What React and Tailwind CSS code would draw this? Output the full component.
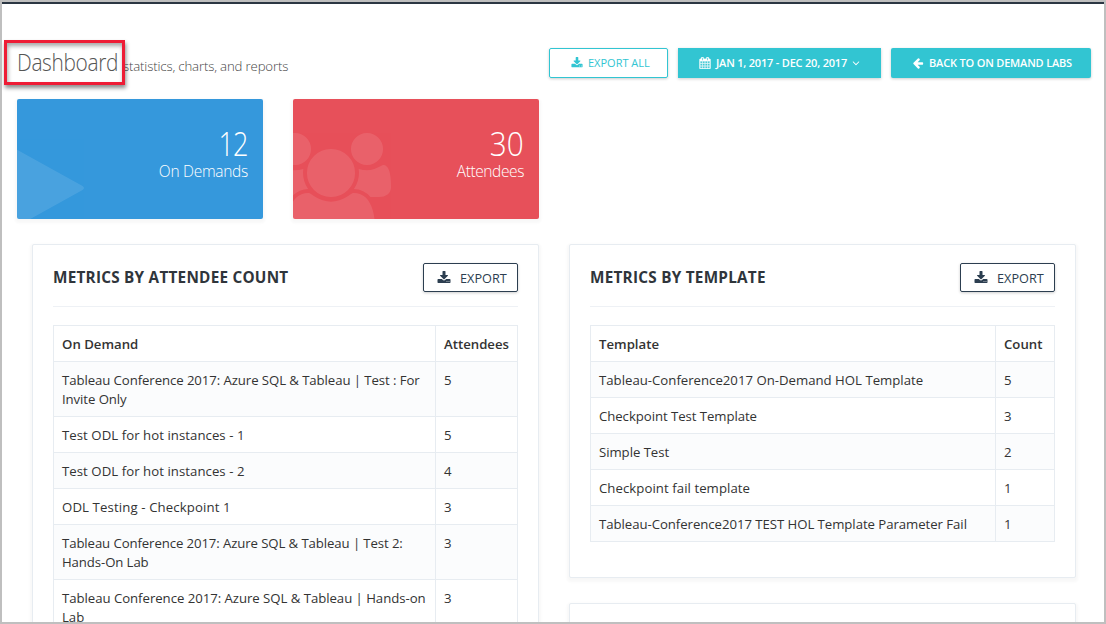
import React from "react";

const PATHS = {
  download:
    "M1344 1344q0-26-19-45t-45-19-45 19-19 45 19 45 45 19 45-19 19-45zm256 0q0-26-19-45t-45-19-45 19-19 45 19 45 45 19 45-19 19-45zm128-224v320q0 40-28 68t-68 28h-1472q-40 0-68-28t-28-68v-320q0-40 28-68t68-28h465l135 136q58 56 136 56t136-56l136-136h464q40 0 68 28t28 68zm-325-569q17 41-14 70l-448 448q-18 19-45 19t-45-19l-448-448q-31-29-14-70 17-39 59-39h256v-448q0-26 19-45t45-19h256q26 0 45 19t19 45v448h256q42 0 59 39z",
  calendar:
    "M192 1664h288v-288h-288v288zm352 0h320v-288h-320v288zm-352-352h288v-320h-288v320zm352 0h320v-320h-320v320zm-352-384h288v-288h-288v288zm736 736h320v-288h-320v288zm-384-736h320v-288h-320v288zm768 736h288v-288h-288v288zm-384-352h320v-320h-320v320zm-352-864v-288q0-13-9.5-22.5t-22.5-9.5h-64q-13 0-22.5 9.5t-9.5 22.5v288q0 13 9.5 22.5t22.5 9.5h64q13 0 22.5-9.5t9.5-22.5zm736 864h288v-320h-288v320zm-384-384h320v-288h-320v288zm384 0h288v-288h-288v288zm32-480v-288q0-13-9.5-22.5t-22.5-9.5h-64q-13 0-22.5 9.5t-9.5 22.5v288q0 13 9.5 22.5t22.5 9.5h64q13 0 22.5-9.5t9.5-22.5zm384-64v1280q0 52-38 90t-90 38h-1408q-52 0-90-38t-38-90v-1280q0-52 38-90t90-38h128v-96q0-66 47-113t113-47h64q66 0 113 47t47 113v96h384v-96q0-66 47-113t113-47h64q66 0 113 47t47 113v96h128q52 0 90 38t38 90z",
  arrowLeft:
    "M1664 896v128q0 53-32.5 90.5t-84.5 37.5h-704l293 294q38 36 38 90t-38 90l-75 76q-37 37-90 37-52 0-91-37l-651-652q-37-37-37-90 0-52 37-91l651-650q38-38 91-38 52 0 90 38l75 74q38 38 38 91t-38 91l-293 293h704q52 0 84.5 37.5t32.5 90.5z",
  angleDown:
    "M1395 736q0 13-10 23l-466 466q-10 10-23 10t-23-10l-466-466q-10-10-10-23t10-23l50-50q10-10 23-10t23 10l393 393 393-393q10-10 23-10t23 10l50 50q10 10 10 23z",
  play: "M1576 927l-1328 738q-23 13-39.5 3t-16.5-36v-1472q0-26 16.5-36t39.5 3l1328 738q23 13 23 31t-23 31z",
  users:
    "M593 896q-162 5-265 128h-134q-82 0-138-40.5t-56-118.5q0-353 124-353 6 0 43.5 21t97.5 42.5 119 21.5q67 0 133-23-5 37-5 66 0 139 81 256zm1071 637q0 120-73 189.5t-194 69.5h-874q-121 0-194-69.5t-73-189.5q0-53 3.5-103.5t14-109 26.5-108.5 43-97.5 62-81 85.5-53.5 111.5-20q10 0 43 21.5t73 48 107 48 135 21.5 135-21.5 107-48 73-48 43-21.5q61 0 111.5 20t85.5 53.5 62 81 43 97.5 26.5 108.5 14 109 3.5 103.5zm-1024-1277q0 106-75 181t-181 75-181-75-75-181 75-181 181-75 181 75 75 181zm704 384q0 159-112.5 271.5t-271.5 112.5-271.5-112.5-112.5-271.5 112.5-271.5 271.5-112.5 271.5 112.5 112.5 271.5zm576 225q0 78-56 118.5t-138 40.5h-134q-103-123-265-128 81-117 81-256 0-29-5-66 66 23 133 23 59 0 119-21.5t97.5-42.5 43.5-21q124 0 124 353zm-128-609q0 106-75 181t-181 75-181-75-75-181 75-181 181-75 181 75 75 181z",
};

function Icon({ name, width = 1792, className }) {
  return (
    <svg viewBox={`0 0 ${width} 1792`} fill="currentColor" className={`shrink-0 ${className}`}>
      <path d={PATHS[name]} />
    </svg>
  );
}

function StatCard({ color, icon, value, valueClass, label, labelClass }) {
  return (
    <div
      className={`relative flex h-[120px] w-[246px] flex-col items-end overflow-hidden rounded-[2px] pr-[15px] pt-[27px] text-white shadow-[0_2px_3px_2px_rgba(0,0,0,0.03)] ${color}`}
    >
      {icon}
      <div className={`origin-right text-[33px] font-light leading-[36px] ${valueClass}`}>{value}</div>
      <div className={`text-[15.5px] font-light leading-[18px] ${labelClass}`}>{label}</div>
    </div>
  );
}

function Panel({ title, titleClass, columns, rows, colWidth, className }) {
  const cell = "border border-[#e7ecf1] px-2 pb-[7px] pt-[9px] align-top";
  return (
    <section
      className={`w-[507px] rounded-[2px] border border-[#e7ecf1] bg-white px-5 pt-[18px] shadow-[0_2px_3px_2px_rgba(0,0,0,0.03)] ${className}`}
    >
      <div className="flex h-11 items-start justify-between border-b border-[#eef1f5]">
        <h2 className={`mt-[3px] whitespace-nowrap text-[15.3px] font-bold leading-[22px] text-[#2f353b] ${titleClass}`}>{title}</h2>
        <button className="flex h-[29px] w-[95px] items-center rounded-[2px] border border-[#2c3e50] pl-[13px] text-[#2c3e50] shadow-[0_1px_3px_rgba(0,0,0,0.2)]">
          <Icon name="download" className="size-[14px]" />
          <span className="ml-[9px] pt-px text-[12.7px] leading-4">EXPORT</span>
        </button>
      </div>
      <table className="mt-[18px] w-full table-fixed border-collapse text-[13.2px] leading-[19px] text-[#333]">
        <colgroup>
          <col />
          <col className={colWidth} />
        </colgroup>
        <thead>
          <tr>
            {columns.map((c) => (
              <th key={c} className={`${cell} text-left font-semibold`}>
                {c}
              </th>
            ))}
          </tr>
        </thead>
        <tbody>
          {rows.map(([name, count, tracking]) => (
            <tr key={name} className="odd:bg-[#fbfcfd]">
              <td className={`${cell} ${tracking}`}>{name}</td>
              <td className={cell}>{count}</td>
            </tr>
          ))}
        </tbody>
      </table>
    </section>
  );
}

// U+2011 keeps the hyphenated word together at the end of the line.
const ATTENDEES = [
  ["Tableau Conference 2017: Azure SQL & Tableau | Test : For Invite Only", 5, "tracking-[-0.08px]"],
  ["Test ODL for hot instances - 1", 5, "tracking-[0.05px]"],
  ["Test ODL for hot instances - 2", 4, "tracking-[0.05px]"],
  ["ODL Testing - Checkpoint 1", 3, "tracking-[0.12px]"],
  ["Tableau Conference 2017: Azure SQL & Tableau | Test 2: Hands-On Lab", 3, "tracking-[-0.1px]"],
  ["Tableau Conference 2017: Azure SQL & Tableau | Hands-on Lab", 3, "tracking-[-0.04px]"],
];

const TEMPLATES = [
  ["Tableau-Conference2017 On-Demand HOL Template", 5, "tracking-[0px]"],
  ["Checkpoint Test Template", 3, "tracking-[-0.06px]"],
  ["Simple Test", 2, "tracking-[-0.05px]"],
  ["Checkpoint fail template", 1, "tracking-[0.06px]"],
  ["Tableau-Conference2017 TEST HOL Template Parameter Fail", 1, "tracking-[-0.05px]"],
];

export default function App() {
  return (
    <div className="h-[624px] w-[1106px] overflow-hidden border-2 border-[#bfbfbf] bg-white font-['Open_Sans','Noto_Sans',sans-serif]">
      <div className="h-0.5 bg-[#2b3643]" />

      <header className="flex h-[95px] items-start justify-between pl-[15px] pr-[13px] pt-[44px]">
        <h1 className="relative flex items-baseline whitespace-nowrap font-light text-[#555]">
          <span className="-mt-px w-[106px] origin-left scale-x-[0.87] text-[24px] leading-[30px] tracking-[-0.4px]">Dashboard</span>
          <span className="text-[13.2px] tracking-[-0.15px] text-[#444]">statistics, charts, and reports</span>
          <span className="absolute -left-[13px] -top-[8px] h-[45px] w-[121px] border-[3px] border-[#ee1c35] shadow-[1px_3px_4px_rgba(0,0,0,0.45),inset_1px_3px_4px_rgba(0,0,0,0.35)]" />
        </h1>
        <div className="flex gap-[10px] whitespace-nowrap text-[11px] leading-4">
          <button className="flex h-[30px] w-[119px] items-center rounded-[2px] border border-[#32c5d2] pl-[21px] text-[#32c5d2] shadow-[0_1px_3px_rgba(0,0,0,0.2)]">
            <Icon name="download" className="size-3" />
            <span className="ml-[5px]">EXPORT ALL</span>
          </button>
          <button className="flex h-[30px] w-[203px] items-center bg-[#32c5d2] pl-[21px] font-semibold text-white shadow-[0_1px_3px_rgba(0,0,0,0.2)]">
            <Icon name="calendar" className="size-3 stroke-current [stroke-width:40]" />
            <span className="ml-[5px] tracking-[-0.2px]">JAN 1, 2017 - DEC 20, 2017</span>
            <Icon name="angleDown" className="ml-[3px] size-3" />
          </button>
          <button className="flex h-[30px] w-[200px] items-center rounded-[2px] bg-[#32c5d2] pl-[21px] font-semibold text-white shadow-[0_1px_3px_rgba(0,0,0,0.2)]">
            <Icon name="arrowLeft" className="size-3" />
            <span className="ml-[5px] tracking-[-0.18px]">BACK TO ON DEMAND LABS</span>
          </button>
        </div>
      </header>

      <div className="flex gap-[30px] pl-[15px]">
        <StatCard
          color="bg-[#3598dc]"
          icon={<Icon name="play" className="absolute -left-[33px] top-[33px] size-[112px] opacity-10" />}
          value="12"
          valueClass="scale-x-[0.82] tracking-[-1px]"
          label="On Demands"
          labelClass="tracking-[-0.28px]"
        />
        <StatCard
          color="bg-[#e7505a]"
          icon={<Icon name="users" width={1920} className="absolute -left-[22px] top-[34px] h-[112px] w-[120px] opacity-10" />}
          value="30"
          valueClass="scale-x-[0.9]"
          label="Attendees"
          labelClass="tracking-[-0.4px]"
        />
      </div>

      <div className="mt-[25px] flex items-start gap-[30px] pl-[30px]">
        <Panel
          title="METRICS BY ATTENDEE COUNT"
          titleClass="tracking-[0.24px]"
          columns={["On Demand", "Attendees"]}
          rows={ATTENDEES.map(([name, count, tracking]) => [name.replace("Hands-on", "Hands\u2011on"), count, tracking])}
          colWidth="w-[82px]"
          className=""
        />
        <div className="flex flex-col gap-[25px]">
          <Panel
            title="METRICS BY TEMPLATE"
            titleClass="tracking-[0.25px]"
            columns={["Template", "Count"]}
            rows={TEMPLATES}
            colWidth="w-[59px]"
            className="h-[334px]"
          />
          <section className="h-[60px] w-[507px] rounded-[2px] border border-[#e7ecf1] bg-white shadow-[0_2px_3px_2px_rgba(0,0,0,0.03)]" />
        </div>
      </div>
    </div>
  );
}
